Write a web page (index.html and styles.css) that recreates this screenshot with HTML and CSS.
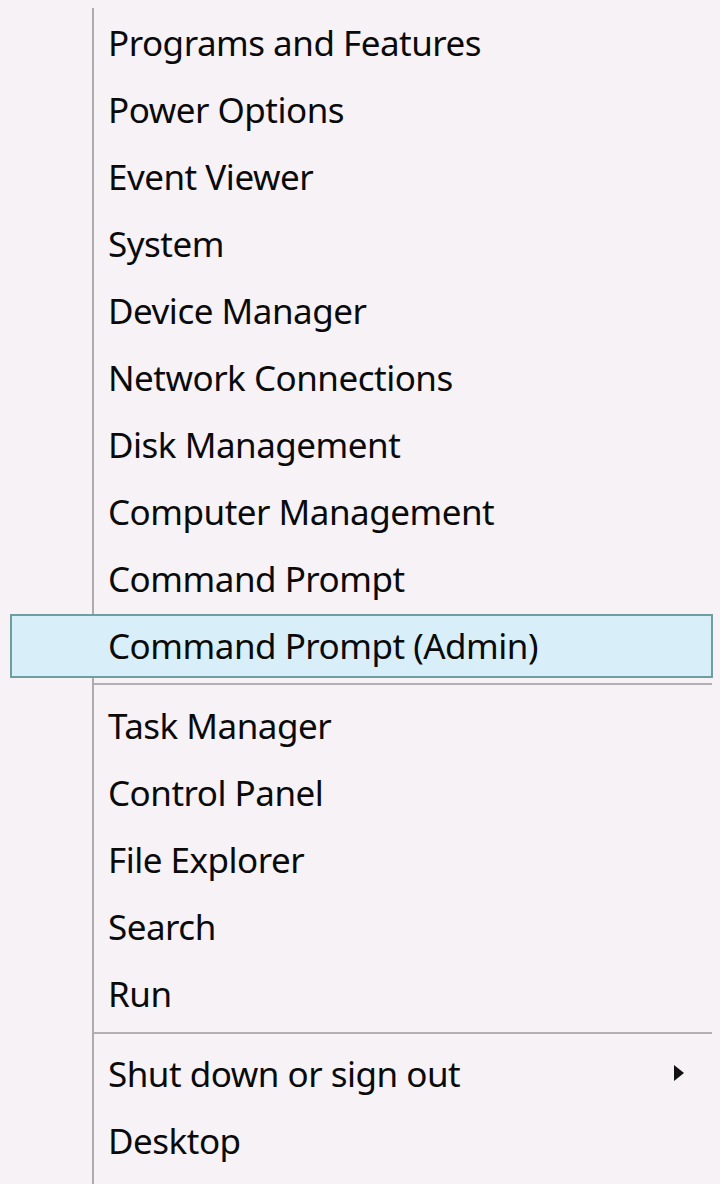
FILE: index.html
```html
<!DOCTYPE html>
<html lang="en">
<head>
<meta charset="utf-8">
<title>Quick Link Menu</title>
<link rel="stylesheet" href="styles.css">
</head>
<body>
<nav class="menu">
  <div class="item">Programs and Features</div>
  <div class="item">Power Options</div>
  <div class="item">Event Viewer</div>
  <div class="item">System</div>
  <div class="item">Device Manager</div>
  <div class="item">Network Connections</div>
  <div class="item">Disk Management</div>
  <div class="item">Computer Management</div>
  <div class="item">Command Prompt</div>
  <div class="item item-active">Command Prompt (Admin)</div>
  <div class="sep sep-first"></div>
  <div class="item">Task Manager</div>
  <div class="item">Control Panel</div>
  <div class="item">File Explorer</div>
  <div class="item">Search</div>
  <div class="item">Run</div>
  <div class="sep sep-second"></div>
  <div class="item item-sub"><span>Shut down or sign out</span><span class="arrow"></span></div>
  <div class="item">Desktop</div>
</nav>
</body>
</html>
```
FILE: styles.css
```css
html, body {
  margin: 0;
  padding: 0;
  background: #f6f2f6;
}

body {
  width: 720px;
  height: 1184px;
  overflow: hidden;
}

.menu {
  display: flex;
  flex-direction: column;
  padding-top: 10px;
  padding-bottom: 9px;
  background:
    linear-gradient(#aeabae, #aeabae) no-repeat 92px 8px / 2px calc(100% - 8px),
    #f6f2f6;
  font-family: "Noto Sans", "Open Sans", sans-serif;
  font-size: 35px;
  letter-spacing: -0.5px;
  color: #0a0a0a;
}

.item {
  height: 67px;
  box-sizing: border-box;
  display: flex;
  align-items: center;
  padding-left: 108px;
  padding-bottom: 3px;
  white-space: nowrap;
}

.item-active {
  height: 64px;
  margin: 1px 7px 2px 10px;
  padding-left: 96px;
  padding-bottom: 1px;
  border: 2px solid #6f9ea1;
  background: #d8effa;
}

.sep {
  height: 2px;
  margin-left: 94px;
  margin-right: 8px;
  background: #b3b0b3;
}

.sep-first {
  margin-top: 3px;
  margin-bottom: 8px;
}

.sep-second {
  margin-top: 4px;
  margin-bottom: 7px;
}

.item-sub {
  justify-content: space-between;
  padding-right: 36px;
}

.arrow {
  width: 0;
  height: 0;
  border-top: 8px solid transparent;
  border-bottom: 8px solid transparent;
  border-left: 10px solid #111;
}
```
